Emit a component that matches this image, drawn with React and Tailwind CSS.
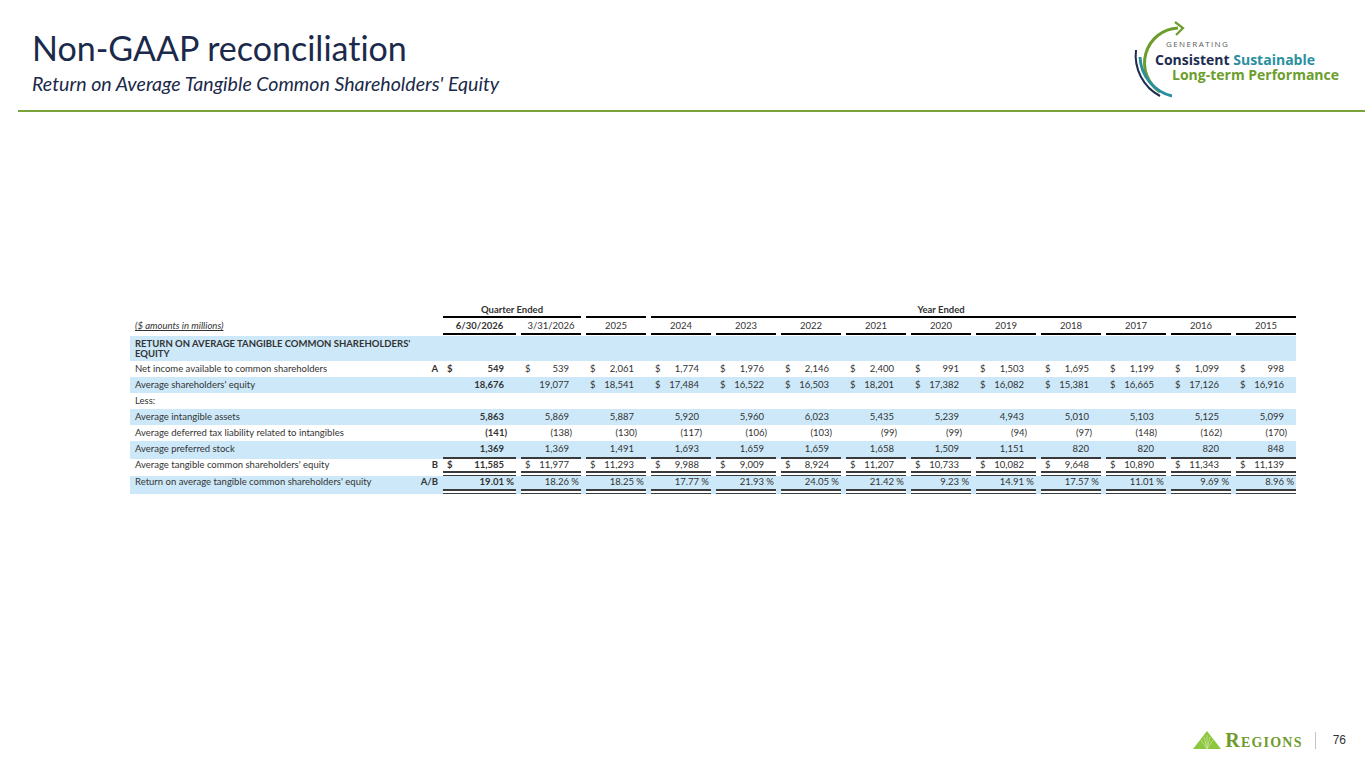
const cols = ['6/30/2026', '3/31/2026', '2025', '2024', '2023', '2022', '2021', '2020', '2019', '2018', '2017', '2016', '2015'];

const rows = [
  { label: 'Net income available to common shareholders', mark: 'A', shade: false,
    dollar: [1, 1, 1, 1, 1, 1, 1, 1, 1, 1, 1, 1, 1],
    vals: ['549', '539', '2,061', '1,774', '1,976', '2,146', '2,400', '991', '1,503', '1,695', '1,199', '1,099', '998'] },
  { label: "Average shareholders' equity", shade: true,
    dollar: [0, 0, 1, 1, 1, 1, 1, 1, 1, 1, 1, 1, 1],
    vals: ['18,676', '19,077', '18,541', '17,484', '16,522', '16,503', '18,201', '17,382', '16,082', '15,381', '16,665', '17,126', '16,916'] },
  { label: 'Less:', shade: false, vals: null },
  { label: 'Average intangible assets', shade: true,
    vals: ['5,863', '5,869', '5,887', '5,920', '5,960', '6,023', '5,435', '5,239', '4,943', '5,010', '5,103', '5,125', '5,099'] },
  { label: 'Average deferred tax liability related to intangibles', shade: false,
    vals: ['(141)', '(138)', '(130)', '(117)', '(106)', '(103)', '(99)', '(99)', '(94)', '(97)', '(148)', '(162)', '(170)'] },
  { label: 'Average preferred stock', shade: true, under: 'single',
    vals: ['1,369', '1,369', '1,491', '1,693', '1,659', '1,659', '1,658', '1,509', '1,151', '820', '820', '820', '848'] },
  { label: "Average tangible common shareholders' equity", mark: 'B', shade: false, under: 'double', h: 'h-[12px]',
    dollar: [1, 1, 1, 1, 1, 1, 1, 1, 1, 1, 1, 1, 1],
    vals: ['11,585', '11,977', '11,293', '9,988', '9,009', '8,924', '11,207', '10,733', '10,082', '9,648', '10,890', '11,343', '11,139'] },
  { label: "Return on average tangible common shareholders' equity", mark: 'A/B', shade: true, under: 'double', h: 'h-[13px]',
    vals: ['19.01 %', '18.26 %', '18.25 %', '17.77 %', '21.93 %', '24.05 %', '21.42 %', '9.23 %', '14.91 %', '17.57 %', '11.01 %', '9.69 %', '8.96 %'] },
];

const grid = 'grid grid-cols-[308px_73px_repeat(12,60px)] gap-x-[5px]';

function ValueCell({ v, dollar, bold, under, h }) {
  const pad = v.endsWith('%') ? 'pr-[2px]' : v.startsWith('(') ? 'pr-[9px]' : 'pr-[12px]';
  return (
    <div className="flex flex-col">
      <div className={`flex justify-between items-center ${h || 'h-[16px]'} pl-[4px] ${pad} ${bold ? 'font-bold' : ''}`}>
        <span>{dollar ? '$' : ''}</span>
        <span>{v}</span>
      </div>
      {under === 'single' && <div className="h-[2px] bg-[#3a3a3a]" />}
      {under === 'double' && (
        <div className="h-[5px] flex flex-col justify-between bg-white">
          <div className="h-[1.5px] bg-[#3a3a3a]" />
          <div className="h-[1.5px] bg-[#3a3a3a]" />
        </div>
      )}
    </div>
  );
}

function Logo() {
  return (
    <div className="relative w-[215px] h-[80px]">
      <svg className="absolute left-0 top-0" width="70" height="80" viewBox="0 0 70 80">
        <path d="M48 10 A35 35 0 0 0 30 74" fill="none" stroke="#6b9e2c" strokeWidth="3" />
        <path d="M45 4 L53 10 L46 17" fill="none" stroke="#6b9e2c" strokeWidth="2.2" />
        <path d="M10 39 A42 42 0 0 0 42 78" fill="none" stroke="#2a8fa0" strokeWidth="3" />
        <path d="M6 32 A46 46 0 0 0 30 78" fill="none" stroke="#1d2d4f" strokeWidth="2" />
      </svg>
      <div className="relative pt-[20px] font-['Open_Sans',sans-serif]">
        <div className="pl-[36px] text-[8px] leading-[12px] tracking-[1.4px] text-[#5a5a5a]">GENERATING</div>
        <div className="pl-[25px] mt-[2px] text-[14px] leading-[15px] font-bold whitespace-nowrap">
          <span className="text-[#1d2d4f]">Consistent </span>
          <span className="text-[#2a8fa0]">Sustainable</span>
        </div>
        <div className="pl-[42px] text-[14px] leading-[15px] font-bold text-[#6b9e2c] whitespace-nowrap">Long-term Performance</div>
      </div>
    </div>
  );
}

function RegionsMark() {
  return (
    <svg width="28" height="18" viewBox="0 0 28 18">
      <polygon points="14,0 28,18 0,18" fill="#8dc63f" />
      <g stroke="#c8e39a" strokeWidth="0.8">
        <line x1="14" y1="18" x2="8" y2="9" />
        <line x1="14" y1="18" x2="11" y2="6" />
        <line x1="14" y1="18" x2="14" y2="4" />
        <line x1="14" y1="18" x2="17" y2="6" />
        <line x1="14" y1="18" x2="20" y2="9" />
      </g>
    </svg>
  );
}

export default function App() {
  return (
    <div className="w-[1365px] h-[768px] bg-white flex flex-col overflow-hidden">
      {/* header */}
      <div className="flex justify-between items-start">
        <div className="pl-[32px] pt-[31px] font-['Lato',sans-serif] text-[#1b2a4a] [font-variant-ligatures:none]">
          <h1 className="text-[34px] leading-none">Non-GAAP reconciliation</h1>
          <p className="mt-[9px] text-[19.6px] leading-none italic">Return on Average Tangible Common Shareholders' Equity</p>
        </div>
        <div className="pt-[18px] pr-[20px]">
          <Logo />
        </div>
      </div>
      <div className="ml-[18px] mt-[12px] h-[2px] bg-[#7aa33c]" />

      {/* table */}
      <div className="ml-[130px] mt-[191px] w-[1166px] font-['Lato',sans-serif] text-[9.5px] text-[#333]">
        <div className={grid}>
          <div />
          <div className="col-span-2 flex flex-col">
            <div className="h-[13px] leading-[13px] text-center font-bold">Quarter Ended</div>
            <div className="h-[2px] bg-black" />
          </div>
          <div className="col-span-11 flex flex-col">
            <div className="h-[13px] leading-[13px] text-center font-bold">Year Ended</div>
            <div className="flex gap-x-[5px]">
              <div className="w-[60px] h-[2px] bg-black" />
              <div className="flex-1 h-[2px] bg-black" />
            </div>
          </div>
        </div>
        <div className={`${grid} mt-[1px]`}>
          <div className="pl-[5px] h-[14px] leading-[14px] italic underline">($ amounts in millions)</div>
          {cols.map((c, i) => (
            <div key={c} className="flex flex-col">
              <div className={`h-[14px] leading-[14px] text-center ${i === 0 ? 'font-bold' : ''}`}>{c}</div>
              <div className="h-[2px] bg-black" />
            </div>
          ))}
        </div>
        <div className="mt-[1px] bg-[#cde9f9] h-[25px] pl-[5px] pt-[3px]">
          <div className="w-[280px] font-bold leading-[10px]">RETURN ON AVERAGE TANGIBLE COMMON SHAREHOLDERS' EQUITY</div>
        </div>
        {rows.map(r => (
          <div key={r.label} className={`${grid} ${r.shade ? 'bg-[#cde9f9]' : ''}`}>
            <div className={`flex justify-between items-center ${r.h || 'h-[16px]'} pl-[5px]`}>
              <span>{r.label}</span>
              {r.mark && <span className="font-bold">{r.mark}</span>}
            </div>
            {r.vals && r.vals.map((v, i) => (
              <ValueCell key={i} v={v} dollar={r.dollar && r.dollar[i]} bold={i === 0} under={r.under} h={r.h} />
            ))}
          </div>
        ))}
      </div>

      {/* footer */}
      <div className="mt-auto mb-[18px] flex justify-end items-center pr-[19px]">
        <RegionsMark />
        <span className="ml-[4px] font-['Liberation_Serif',serif] font-bold text-[20px] leading-none text-[#6f9b2c] [font-variant:small-caps] tracking-[1.2px]">Regions</span>
        <div className="ml-[12px] w-[1px] h-[17px] bg-[#c4c4c4]" />
        <span className="ml-[17px] font-['Liberation_Sans',sans-serif] text-[12px] text-[#333]">76</span>
      </div>
    </div>
  );
}
